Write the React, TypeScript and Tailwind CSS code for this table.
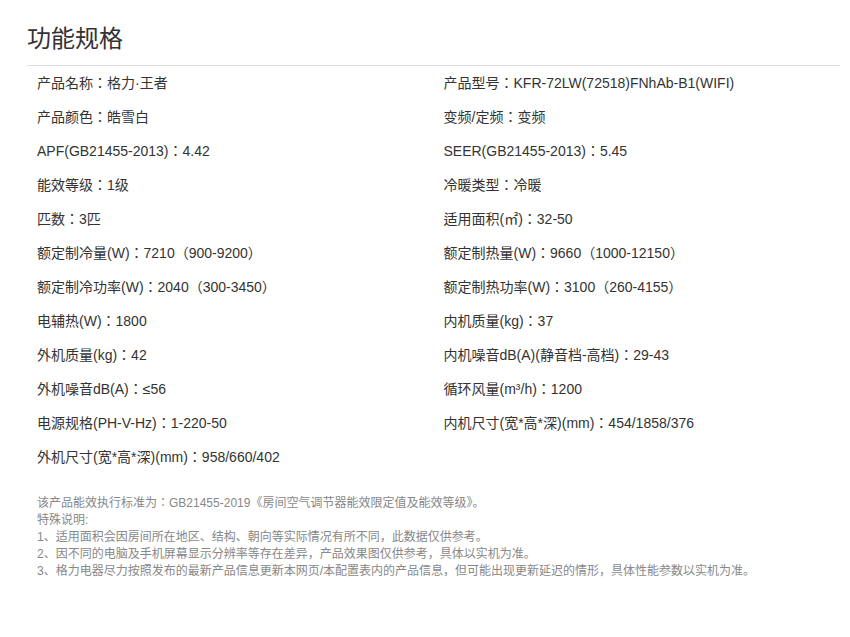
const specs: [string, string][] = [
  ['产品名称：格力·王者', '产品型号：KFR-72LW(72518)FNhAb-B1(WIFI)'],
  ['产品颜色：皓雪白', '变频/定频：变频'],
  ['APF(GB21455-2013)：4.42', 'SEER(GB21455-2013)：5.45'],
  ['能效等级：1级', '冷暖类型：冷暖'],
  ['匹数：3匹', '适用面积(㎡)：32-50'],
  ['额定制冷量(W)：7210（900-9200）', '额定制热量(W)：9660（1000-12150）'],
  ['额定制冷功率(W)：2040（300-3450）', '额定制热功率(W)：3100（260-4155）'],
  ['电辅热(W)：1800', '内机质量(kg)：37'],
  ['外机质量(kg)：42', '内机噪音dB(A)(静音档-高档)：29-43'],
  ['外机噪音dB(A)：≤56', '循环风量(m³/h)：1200'],
  ['电源规格(PH-V-Hz)：1-220-50', '内机尺寸(宽*高*深)(mm)：454/1858/376'],
  ['外机尺寸(宽*高*深)(mm)：958/660/402', ''],
];

const notes = [
  '该产品能效执行标准为：GB21455-2019《房间空气调节器能效限定值及能效等级》。',
  '特殊说明:',
  '1、适用面积会因房间所在地区、结构、朝向等实际情况有所不同，此数据仅供参考。',
  '2、因不同的电脑及手机屏幕显示分辨率等存在差异，产品效果图仅供参考，具体以实机为准。',
  '3、格力电器尽力按照发布的最新产品信息更新本网页/本配置表内的产品信息，但可能出现更新延迟的情形，具体性能参数以实机为准。',
];

export default function App() {
  return (
    <div
      className="w-[850px] h-[637px] bg-white pl-[27px] pr-[10px] pt-[23px]"
      style={{ fontFamily: '"Liberation Sans", "Noto Sans CJK JP", sans-serif' }}
    >
      <h1 className="text-[24px] leading-[32px] text-[#333] pb-[10px] border-b border-[#dddddd] font-normal">
        功能规格
      </h1>
      <div className="grid grid-cols-2">
        {specs.map(([a, b], i) => (
          <div key={i} className="contents">
            <div className="h-[34px] pl-[10px] flex items-center text-[14px] text-[#333]">{a}</div>
            <div className="h-[34px] pl-[10px] flex items-center text-[14px] text-[#333]">{b}</div>
          </div>
        ))}
      </div>
      <div className="mt-[21px] pl-[10px] text-[12px] leading-[17px] text-[#888]">
        {notes.map((n, i) => (
          <p key={i}>{n}</p>
        ))}
      </div>
    </div>
  );
}
